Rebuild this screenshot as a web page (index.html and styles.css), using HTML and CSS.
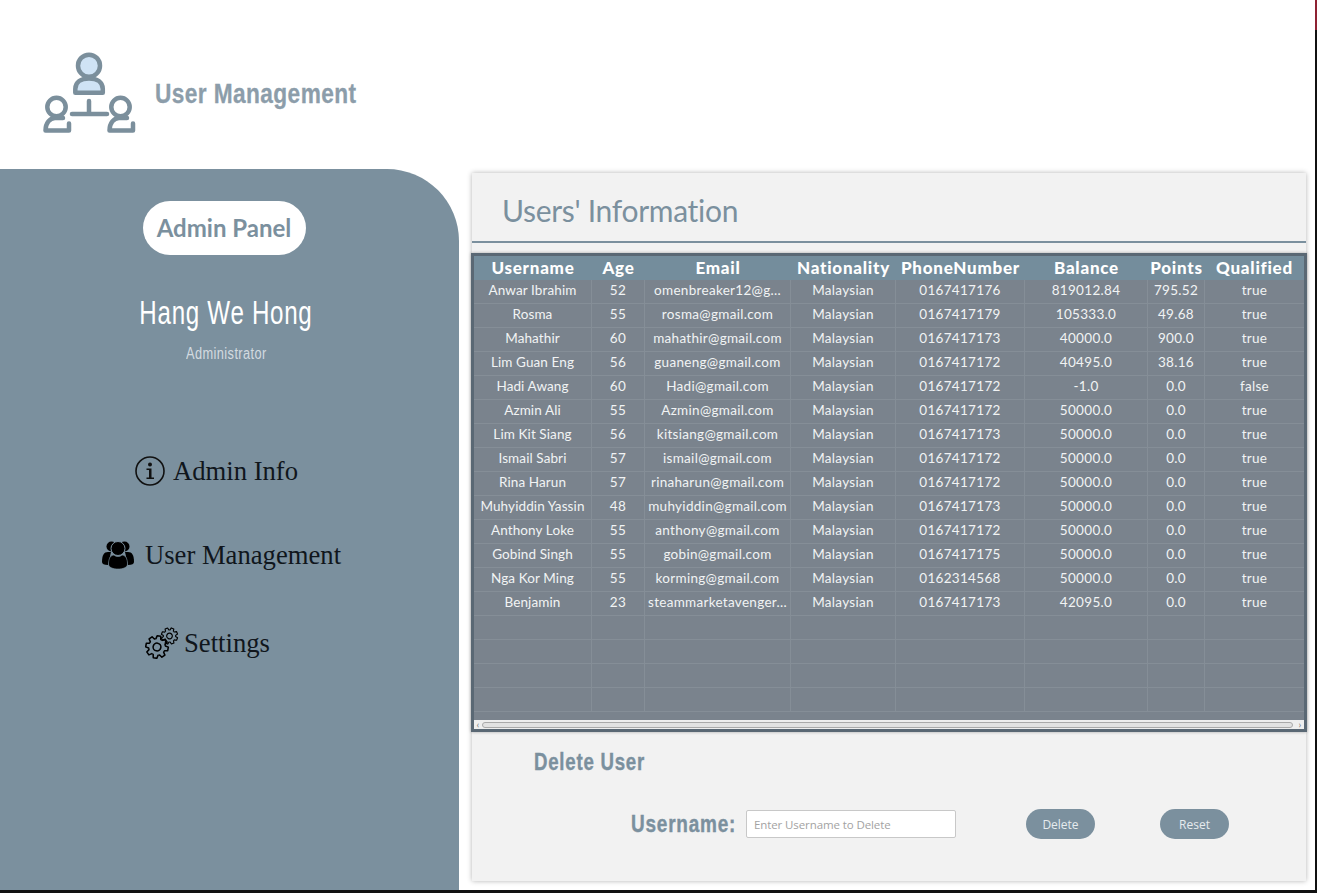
FILE: index.html
```html
<!DOCTYPE html>
<html lang="en">
<head>
<meta charset="utf-8">
<title>User Management</title>
<link rel="stylesheet" href="styles.css">
</head>
<body>
<div class="window">
  <header class="topbar">
    <svg class="logo" viewBox="0 0 94 82" width="94" height="82" aria-hidden="true">
      <circle cx="47" cy="13.7" r="11" fill="#cfe3f5" stroke="#7b8f9c" stroke-width="4.5"/>
      <path d="M33.3 40.8 V37 C33.3 30 39 26.5 47 26.5 C55 26.5 60.8 30 60.8 37 V40.8 Z" fill="#cfe3f5" stroke="#7b8f9c" stroke-width="4.5" stroke-linejoin="round"/>
      <g fill="none" stroke="#7b8f9c" stroke-width="4.5" stroke-linecap="round" stroke-linejoin="round">
        <circle cx="14.5" cy="55" r="9.2"/>
        <path d="M21 66 H13 C8 66 3.5 71 3.5 78.5 H27 V71.5"/>
        <circle cx="78.5" cy="55" r="9.2"/>
        <path d="M85 66 H77 C72 66 67.5 71 67.5 78.5 H91 V71.5"/>
        <path d="M30 62 H65 M47 49 V62"/>
      </g>
    </svg>
    <h1 class="app-title">User Management</h1>
  </header>
  <div class="body-row">
    <aside class="sidebar">
      <div class="pill">Admin Panel</div>
      <div class="admin-name">Hang We Hong</div>
      <div class="admin-role">Administrator</div>
      <nav class="nav">
        <a class="nav-item nav-info">
          <svg viewBox="0 0 30 30" width="30" height="30" aria-hidden="true">
            <circle cx="15" cy="15" r="14" fill="none" stroke="#111" stroke-width="1.6"/>
            <circle cx="15" cy="8.5" r="2" fill="#111"/>
            <path d="M11.5 12.5 H16.5 V21.5 H19 V23 H11.5 V21.5 H14 V14 H11.5 Z" fill="#111"/>
          </svg>
          <span>Admin Info</span>
        </a>
        <a class="nav-item nav-users">
          <svg viewBox="0 0 34 30" width="34" height="30" aria-hidden="true">
            <g fill="#000">
              <circle cx="10.5" cy="6.5" r="5"/>
              <circle cx="23.5" cy="6.5" r="5"/>
              <path d="M1 22 C1 15 3 12 7 12 H10 L7 25 C3 25 1 24 1 22 Z"/>
              <path d="M33 22 C33 15 31 12 27 12 H24 L27 25 C31 25 33 24 33 22 Z"/>
              <circle cx="17" cy="8.5" r="7" stroke="#7b909e" stroke-width="1"/>
              <path d="M7.5 24 C7.5 18 10 15 13 15 C15 17 19 17 21 15 C24 15 26.5 18 26.5 24 C26.5 27.5 22 29 17 29 C12 29 7.5 27.5 7.5 24 Z" stroke="#7b909e" stroke-width=".6"/>
            </g>
          </svg>
          <span>User Management</span>
        </a>
        <a class="nav-item nav-settings">
          <svg viewBox="0 0 34 32" width="34" height="32" aria-hidden="true">
            <defs>
              <path id="tooth" d="M-2.49 -6 L-1.9 -6.2 L-1.4 -8.6 H1.4 L1.9 -6.2 L2.49 -6"/>
              <g id="gear">
                <use href="#tooth"/>
                <use href="#tooth" transform="rotate(45)"/>
                <use href="#tooth" transform="rotate(90)"/>
                <use href="#tooth" transform="rotate(135)"/>
                <use href="#tooth" transform="rotate(180)"/>
                <use href="#tooth" transform="rotate(225)"/>
                <use href="#tooth" transform="rotate(270)"/>
                <use href="#tooth" transform="rotate(315)"/>
                <circle r="3"/>
              </g>
            </defs>
            <g fill="none" stroke="#000" stroke-width="1.2" stroke-linejoin="round">
              <use href="#gear" transform="translate(12 20) scale(1.3) rotate(10)"/>
              <use href="#gear" transform="translate(24.5 9) scale(.95) rotate(22)"/>
            </g>
          </svg>
          <span>Settings</span>
        </a>
      </nav>
    </aside>
    <main class="panel">
      <h2 class="panel-title">Users' Information</h2>
      <div class="table-frame">
        <table class="users">
          <colgroup>
            <col class="c1"><col class="c2"><col class="c3"><col class="c4"><col class="c5"><col class="c6"><col class="c7"><col class="c8">
          </colgroup>
          <thead>
            <tr><th>Username</th><th>Age</th><th>Email</th><th>Nationality</th><th>PhoneNumber</th><th>Balance</th><th>Points</th><th>Qualified</th></tr>
          </thead>
          <tbody>
            <tr><td>Anwar Ibrahim</td><td>52</td><td>omenbreaker12@g...</td><td>Malaysian</td><td>0167417176</td><td>819012.84</td><td>795.52</td><td>true</td></tr>
            <tr><td>Rosma</td><td>55</td><td>rosma@gmail.com</td><td>Malaysian</td><td>0167417179</td><td>105333.0</td><td>49.68</td><td>true</td></tr>
            <tr><td>Mahathir</td><td>60</td><td>mahathir@gmail.com</td><td>Malaysian</td><td>0167417173</td><td>40000.0</td><td>900.0</td><td>true</td></tr>
            <tr><td>Lim Guan Eng</td><td>56</td><td>guaneng@gmail.com</td><td>Malaysian</td><td>0167417172</td><td>40495.0</td><td>38.16</td><td>true</td></tr>
            <tr><td>Hadi Awang</td><td>60</td><td>Hadi@gmail.com</td><td>Malaysian</td><td>0167417172</td><td>-1.0</td><td>0.0</td><td>false</td></tr>
            <tr><td>Azmin Ali</td><td>55</td><td>Azmin@gmail.com</td><td>Malaysian</td><td>0167417172</td><td>50000.0</td><td>0.0</td><td>true</td></tr>
            <tr><td>Lim Kit Siang</td><td>56</td><td>kitsiang@gmail.com</td><td>Malaysian</td><td>0167417173</td><td>50000.0</td><td>0.0</td><td>true</td></tr>
            <tr><td>Ismail Sabri</td><td>57</td><td>ismail@gmail.com</td><td>Malaysian</td><td>0167417172</td><td>50000.0</td><td>0.0</td><td>true</td></tr>
            <tr><td>Rina Harun</td><td>57</td><td>rinaharun@gmail.com</td><td>Malaysian</td><td>0167417172</td><td>50000.0</td><td>0.0</td><td>true</td></tr>
            <tr><td>Muhyiddin Yassin</td><td>48</td><td>muhyiddin@gmail.com</td><td>Malaysian</td><td>0167417173</td><td>50000.0</td><td>0.0</td><td>true</td></tr>
            <tr><td>Anthony Loke</td><td>55</td><td>anthony@gmail.com</td><td>Malaysian</td><td>0167417172</td><td>50000.0</td><td>0.0</td><td>true</td></tr>
            <tr><td>Gobind Singh</td><td>55</td><td>gobin@gmail.com</td><td>Malaysian</td><td>0167417175</td><td>50000.0</td><td>0.0</td><td>true</td></tr>
            <tr><td>Nga Kor Ming</td><td>55</td><td>korming@gmail.com</td><td>Malaysian</td><td>0162314568</td><td>50000.0</td><td>0.0</td><td>true</td></tr>
            <tr><td>Benjamin</td><td>23</td><td>steammarketavenger...</td><td>Malaysian</td><td>0167417173</td><td>42095.0</td><td>0.0</td><td>true</td></tr>
            <tr><td></td><td></td><td></td><td></td><td></td><td></td><td></td><td></td></tr>
            <tr><td></td><td></td><td></td><td></td><td></td><td></td><td></td><td></td></tr>
            <tr><td></td><td></td><td></td><td></td><td></td><td></td><td></td><td></td></tr>
            <tr><td></td><td></td><td></td><td></td><td></td><td></td><td></td><td></td></tr>
          </tbody>
        </table>
        <div class="scrollbar">
          <span class="arrow">‹</span>
          <div class="thumb"></div>
          <span class="arrow">›</span>
        </div>
      </div>
      <section class="delete">
        <h3 class="delete-title">Delete User</h3>
        <form class="delete-form">
          <label class="delete-label" for="u">Username:</label>
          <input class="delete-input" id="u" type="text" placeholder="Enter Username to Delete">
          <button class="btn btn-delete" type="button">Delete</button>
          <button class="btn btn-reset" type="button">Reset</button>
        </form>
      </section>
    </main>
  </div>
</div>
</body>
</html>
```
FILE: styles.css
```css
* { box-sizing: border-box; }
html, body { margin: 0; padding: 0; height: 100%; overflow: hidden; }
body { font-family: "Lato", sans-serif; background: linear-gradient(#8e2233 0 30px, #111 30px); font-variant-ligatures: none; }
.window { width: 1315px; height: 890px; background: #fff; display: flex; flex-direction: column; }
.topbar { height: 169px; flex: none; display: flex; align-items: flex-start; padding: 52px 0 0 42px; }
.logo { flex: none; }
.app-title { margin: 25px 0 0 19px; font: 700 28px/34px "Liberation Sans", sans-serif; color: #8c9daa; letter-spacing: 0.5px; white-space: nowrap; transform: scaleX(.81); transform-origin: left center; -webkit-text-stroke: .3px #8c9daa; }
.body-row { flex: 1; display: flex; min-height: 0; }
.sidebar { width: 459px; flex: none; background: #7b909e; border-top-right-radius: 72px; display: flex; flex-direction: column; align-items: center; padding: 32px 7px 0 0; }
.pill { width: 163px; height: 54px; margin-right: 4px; border-radius: 27px; background: #fff; color: #7b909e; font: 700 24px/54px "Lato", sans-serif; text-align: center; }
.admin-name { margin-top: 36px; color: #fff; font: 400 34px/42px "Liberation Sans", sans-serif; letter-spacing: 1px; white-space: nowrap; transform: scaleX(.71); }
.admin-role { margin-top: 11px; color: #d3dbe0; font: 400 16px/20px "Liberation Sans", sans-serif; letter-spacing: 0.5px; transform: scaleX(.8); }
.nav { display: flex; flex-direction: column; align-items: center; margin-top: 87px; width: 100%; }
.nav-item { display: flex; align-items: center; color: #10161c; font: 400 26.67px/40px "Liberation Serif", serif; }
.nav-info { gap: 8px; margin-right: 19px; }
.nav-users { gap: 10px; margin-top: 44px; margin-right: 10px; }
.nav-settings { gap: 5px; margin-top: 48px; margin-right: 37px; }
.panel { width: 834px; height: 708px; margin: 4px 0 0 13px; background: #f2f2f2; box-shadow: 0 0 5px rgba(0,0,0,.3); flex: none; display: flex; flex-direction: column; }
.panel-title { margin: 0; height: 70px; border-bottom: 2px solid #7b909e; padding: 16px 0 0 30px; font: 400 30px/42px "Lato", sans-serif; letter-spacing: -.3px; color: #7b909e; }
.table-frame { margin: 10px -1px 0 -1px; border: 3px solid #5a6874; background: #7a838d; height: 479px; display: flex; flex-direction: column; box-shadow: 0 0 3px rgba(0,0,0,.3); }
.users { border-collapse: separate; border-spacing: 0; table-layout: fixed; width: 830px; }
.c1 { width: 118px; } .c2 { width: 53px; } .c3 { width: 146px; } .c4 { width: 105px; }
.c5 { width: 129px; } .c6 { width: 123px; } .c7 { width: 57px; } .c8 { width: 99px; }
.users th { height: 24px; padding: 0; vertical-align: top; background: #748d9c; color: #fff; font: 900 17px/23px "Lato", sans-serif; letter-spacing: .75px; text-align: center; white-space: nowrap; }
.users td { height: 24px; padding: 0; vertical-align: top; border-right: 1px solid #858e97; border-bottom: 1px solid #858e97; color: #f1f3f4; font: 400 13.5px/21px "Lato", sans-serif; letter-spacing: .3px; text-align: center; white-space: nowrap; overflow: hidden; }
.users td:first-child { letter-spacing: .1px; }
.users td:last-child { border-right: 0; }
.scrollbar { height: 9px; margin-top: auto; background: #eee; display: flex; align-items: center; padding: 0 1px; color: #777; }
.arrow { width: 6px; text-align: center; font: 400 10px/9px "Lato", sans-serif; }
.thumb { flex: 1; height: 6px; margin: 0 4px 0 1px; border: 1px solid #a9a9a9; border-radius: 3px; background: #e2e2e2; }
.delete { flex: 1; }
.delete-title { margin: 14px 0 0 62px; font: 700 24px/32px "Liberation Sans", sans-serif; color: #7b909e; letter-spacing: 1px; white-space: nowrap; transform: scaleX(.776); transform-origin: left center; -webkit-text-stroke: .4px #7b909e; }
.delete-form { display: flex; align-items: center; margin: 31px 0 0 159px; }
.delete-label { font: 700 24px/30px "Liberation Sans", sans-serif; color: #7b909e; letter-spacing: 1px; width: 115px; flex: none; white-space: nowrap; transform: scaleX(.79); transform-origin: left center; -webkit-text-stroke: .4px #7b909e; }
.delete-input { width: 210px; height: 28px; border: 1px solid #c8c8c8; border-radius: 2px; background: #fff; padding: 0 7px; font: 400 11.5px "Open Sans", sans-serif; letter-spacing: -.1px; outline: none; }
.delete-input::placeholder { color: #a3a3a3; }
.btn { width: 69px; height: 30px; border: 0; border-radius: 15px; background: #7b909e; color: #e6ebee; font: 400 12px "Open Sans", sans-serif; padding: 0; }
.btn-delete { margin-left: 70px; }
.btn-reset { margin-left: 65px; }
```
